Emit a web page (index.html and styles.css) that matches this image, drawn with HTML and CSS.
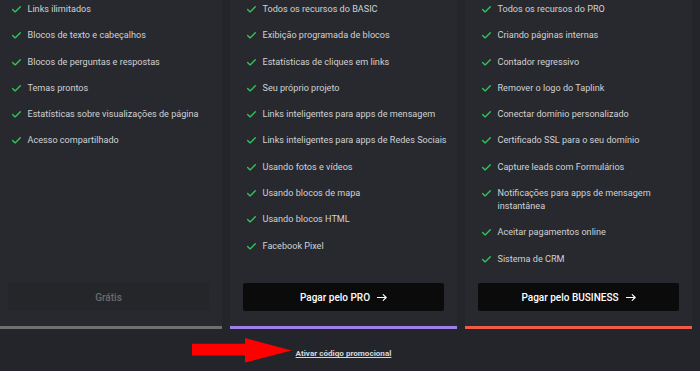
FILE: index.html
```html
<!DOCTYPE html>
<html lang="pt">
<head>
<meta charset="utf-8">
<title>Planos</title>
<link rel="stylesheet" href="styles.css">
</head>
<body>
<div class="page">
  <div class="plans">
    <div class="plan plan-basic">
      <ul class="features">
        <li><svg class="check" viewBox="0 0 9 13"><path d="M0.6 6.4 L3.1 8.9 L8.3 3.8"/></svg><span>Links ilimitados</span></li>
        <li><svg class="check" viewBox="0 0 9 13"><path d="M0.6 6.4 L3.1 8.9 L8.3 3.8"/></svg><span>Blocos de texto e cabeçalhos</span></li>
        <li><svg class="check" viewBox="0 0 9 13"><path d="M0.6 6.4 L3.1 8.9 L8.3 3.8"/></svg><span>Blocos de perguntas e respostas</span></li>
        <li><svg class="check" viewBox="0 0 9 13"><path d="M0.6 6.4 L3.1 8.9 L8.3 3.8"/></svg><span>Temas prontos</span></li>
        <li><svg class="check" viewBox="0 0 9 13"><path d="M0.6 6.4 L3.1 8.9 L8.3 3.8"/></svg><span>Estatísticas sobre visualizações de página</span></li>
        <li><svg class="check" viewBox="0 0 9 13"><path d="M0.6 6.4 L3.1 8.9 L8.3 3.8"/></svg><span>Acesso compartilhado</span></li>
      </ul>
      <button class="btn btn-free">Grátis</button>
    </div>
    <div class="plan plan-pro">
      <ul class="features">
        <li><svg class="check" viewBox="0 0 9 13"><path d="M0.6 6.4 L3.1 8.9 L8.3 3.8"/></svg><span>Todos os recursos do BASIC</span></li>
        <li><svg class="check" viewBox="0 0 9 13"><path d="M0.6 6.4 L3.1 8.9 L8.3 3.8"/></svg><span>Exibição programada de blocos</span></li>
        <li><svg class="check" viewBox="0 0 9 13"><path d="M0.6 6.4 L3.1 8.9 L8.3 3.8"/></svg><span>Estatísticas de cliques em links</span></li>
        <li><svg class="check" viewBox="0 0 9 13"><path d="M0.6 6.4 L3.1 8.9 L8.3 3.8"/></svg><span>Seu próprio projeto</span></li>
        <li><svg class="check" viewBox="0 0 9 13"><path d="M0.6 6.4 L3.1 8.9 L8.3 3.8"/></svg><span>Links inteligentes para apps de mensagem</span></li>
        <li><svg class="check" viewBox="0 0 9 13"><path d="M0.6 6.4 L3.1 8.9 L8.3 3.8"/></svg><span>Links inteligentes para apps de Redes Sociais</span></li>
        <li><svg class="check" viewBox="0 0 9 13"><path d="M0.6 6.4 L3.1 8.9 L8.3 3.8"/></svg><span>Usando fotos e vídeos</span></li>
        <li><svg class="check" viewBox="0 0 9 13"><path d="M0.6 6.4 L3.1 8.9 L8.3 3.8"/></svg><span>Usando blocos de mapa</span></li>
        <li><svg class="check" viewBox="0 0 9 13"><path d="M0.6 6.4 L3.1 8.9 L8.3 3.8"/></svg><span>Usando blocos HTML</span></li>
        <li><svg class="check" viewBox="0 0 9 13"><path d="M0.6 6.4 L3.1 8.9 L8.3 3.8"/></svg><span>Facebook Pixel</span></li>
      </ul>
      <button class="btn btn-pay">Pagar pelo PRO<svg class="arrow" viewBox="0 0 10 7"><path d="M0 3.5 H9.2 M6.2 0.6 L9.2 3.5 L6.2 6.4"/></svg></button>
    </div>
    <div class="plan plan-business">
      <ul class="features">
        <li><svg class="check" viewBox="0 0 9 13"><path d="M0.6 6.4 L3.1 8.9 L8.3 3.8"/></svg><span>Todos os recursos do PRO</span></li>
        <li><svg class="check" viewBox="0 0 9 13"><path d="M0.6 6.4 L3.1 8.9 L8.3 3.8"/></svg><span>Criando páginas internas</span></li>
        <li><svg class="check" viewBox="0 0 9 13"><path d="M0.6 6.4 L3.1 8.9 L8.3 3.8"/></svg><span>Contador regressivo</span></li>
        <li><svg class="check" viewBox="0 0 9 13"><path d="M0.6 6.4 L3.1 8.9 L8.3 3.8"/></svg><span>Remover o logo do Taplink</span></li>
        <li><svg class="check" viewBox="0 0 9 13"><path d="M0.6 6.4 L3.1 8.9 L8.3 3.8"/></svg><span>Conectar domínio personalizado</span></li>
        <li><svg class="check" viewBox="0 0 9 13"><path d="M0.6 6.4 L3.1 8.9 L8.3 3.8"/></svg><span>Certificado SSL para o seu domínio</span></li>
        <li><svg class="check" viewBox="0 0 9 13"><path d="M0.6 6.4 L3.1 8.9 L8.3 3.8"/></svg><span>Capture leads com Formulários</span></li>
        <li><svg class="check" viewBox="0 0 9 13"><path d="M0.6 6.4 L3.1 8.9 L8.3 3.8"/></svg><span>Notificações para apps de mensagem instantânea</span></li>
        <li><svg class="check" viewBox="0 0 9 13"><path d="M0.6 6.4 L3.1 8.9 L8.3 3.8"/></svg><span>Aceitar pagamentos online</span></li>
        <li><svg class="check" viewBox="0 0 9 13"><path d="M0.6 6.4 L3.1 8.9 L8.3 3.8"/></svg><span>Sistema de CRM</span></li>
      </ul>
      <button class="btn btn-pay">Pagar pelo BUSINESS<svg class="arrow" viewBox="0 0 10 7"><path d="M0 3.5 H9.2 M6.2 0.6 L9.2 3.5 L6.2 6.4"/></svg></button>
    </div>
  </div>
  <div class="promo">
    <a class="promo-link" href="#">Ativar código promocional</a>
  </div>
  <svg class="annot-arrow" viewBox="0 0 100 25"><polygon points="0,5.8 53,5.8 53,0 99.6,12.4 53,24.6 53,17.6 0,17.6"/></svg>
</div>
</body>
</html>
```

FILE: styles.css
```css
html, body {
  margin: 0;
  padding: 0;
  background: #24252a;
}

body {
  font-family: Roboto, "Noto Sans", Arial, sans-serif;
  width: 700px;
  height: 371px;
  overflow: hidden;
}

.page {
  position: relative;
  width: 700px;
  height: 371px;
}

.plans {
  display: flex;
  gap: 8px;
  margin-left: -5px;
  width: 697px;
  align-items: stretch;
}

.plan {
  flex: 0 0 227px;
  box-sizing: border-box;
  display: flex;
  flex-direction: column;
  background: #28292e;
  padding: 3px 13px 15px 13px;
  border-bottom: 3px solid #6f6f6f;
}

.plan-pro {
  border-bottom-color: #9d81ea;
}

.plan-business {
  border-bottom-color: #f05a46;
}

.features {
  list-style: none;
  margin: 0 -10px 4.4px 0;
  padding: 0;
  flex: 1 1 auto;
}

.features li {
  display: flex;
  align-items: flex-start;
  padding-left: 3.5px;
  margin-bottom: 13.3px;
  font-size: 9.1px;
  line-height: 13px;
  color: #d0d1d4;
}

.check {
  flex: 0 0 9px;
  width: 9px;
  height: 13px;
  margin-right: 7px;
}

.check path {
  fill: none;
  stroke: #31c65b;
  stroke-width: 1.35;
  stroke-linecap: round;
  stroke-linejoin: round;
}

.btn {
  display: flex;
  align-items: center;
  justify-content: center;
  width: 100%;
  height: 28px;
  border: none;
  border-radius: 2px;
  font-family: Roboto, "Noto Sans", Arial, sans-serif;
  font-size: 10px;
  font-weight: 500;
  padding: 0;
  cursor: pointer;
}

.btn-free {
  background: #25262a;
  color: #6b6c70;
}

.btn-pay {
  background: #0b0b0c;
  color: #ffffff;
}

.arrow {
  width: 10px;
  height: 7px;
  margin-left: 7px;
}

.arrow path {
  fill: none;
  stroke: #ffffff;
  stroke-width: 1.1;
  stroke-linecap: round;
  stroke-linejoin: round;
}

.promo {
  margin-left: -5px;
  width: 697px;
  text-align: center;
  padding-top: 16px;
  line-height: 12px;
}

.promo-link {
  font-size: 8.1px;
  font-weight: 700;
  color: #d6d7da;
  text-decoration: underline;
}

.annot-arrow {
  position: absolute;
  left: 192px;
  top: 338px;
  width: 100px;
  height: 25px;
}

.annot-arrow polygon {
  fill: #ff0000;
}
```
